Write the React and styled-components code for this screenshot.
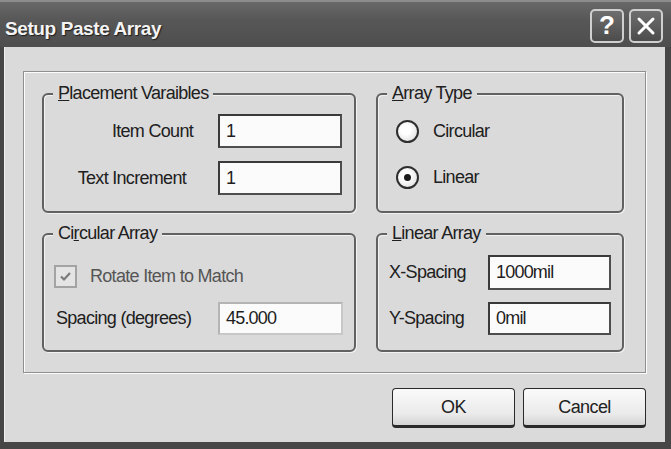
import React from "react";
import styled, { createGlobalStyle } from "styled-components";

const GlobalStyle = createGlobalStyle`
  html, body {
    margin: 0;
    padding: 0;
    background: #444;
  }
  body {
    font-family: "Liberation Sans", Arial, sans-serif;
  }
`;

const Window = styled.div`
  width: 671px;
  height: 449px;
  display: flex;
  flex-direction: column;
  background: #464646;
  box-sizing: border-box;
`;

const TitleBar = styled.div`
  height: 47px;
  flex: 0 0 47px;
  box-sizing: border-box;
  display: flex;
  align-items: center;
  padding: 2px 8px 0 5px;
  border-top: 2px solid #8c8c8c;
  background: linear-gradient(#686868, #575757 40%, #4e4e4e);
`;

const Title = styled.div`
  flex: 1;
  color: #f4f4f4;
  font-size: 19px;
  font-weight: bold;
  letter-spacing: -0.4px;
  text-shadow: 1px 1px 1px #1e1e1e;
  margin-top: 6px;
`;

const CaptionButton = styled.div`
  width: 34px;
  height: 34px;
  box-sizing: border-box;
  margin-left: ${(p) => (p.$first ? "0" : "5px")};
  border: 2px solid #cfcfcf;
  border-radius: 5px;
  background: linear-gradient(#6e6e6e, #4c4c4c);
  display: flex;
  align-items: center;
  justify-content: center;
  color: #fff;
  font-size: 26px;
  font-weight: bold;
`;

const Body = styled.div`
  flex: 1;
  margin: 0 6px 7px 4px;
  background: #dadada;
  padding: 24px 19px 0 18px;
  display: flex;
  flex-direction: column;
  border-left: 1px solid #f0f0f0;
`;

const Panel = styled.div`
  height: 302px;
  box-sizing: border-box;
  border: 1px solid #8f8f8f;
  box-shadow: inset 1px 1px 0 #fdfdfd, 1px 1px 0 #fdfdfd;
  display: grid;
  grid-template-columns: 314px 248px;
  grid-template-rows: 120px 119px;
  column-gap: 20px;
  row-gap: 20px;
  padding: 21px 0 0 18px;
`;

const Group = styled.div`
  position: relative;
  box-sizing: border-box;
  border: 2px solid #616161;
  border-radius: 6px;
  box-shadow: inset 1px 1px 0 #f2f2f2, 1px 1px 0 #f2f2f2;
  display: flex;
  flex-direction: column;
  padding: ${(p) => p.$pad};
  gap: ${(p) => p.$gap || "13px"};
`;

const Legend = styled.span`
  position: absolute;
  top: -12px;
  left: 9px;
  padding: 0 5px;
  background: #dadada;
  font-size: 18px;
  line-height: 20px;
  letter-spacing: -0.7px;
  color: #202020;
`;

const U = styled.span`
  text-decoration: underline;
`;

const FieldRow = styled.div`
  display: grid;
  grid-template-columns: ${(p) => p.$label}px ${(p) => p.$input}px;
  align-items: center;
`;

const Label = styled.span`
  font-size: 18px;
  letter-spacing: -0.7px;
  color: #202020;
  text-align: ${(p) => (p.$right ? "right" : "left")};
  padding-right: ${(p) => p.$pr || 0}px;
  padding-left: ${(p) => p.$pl || 0}px;
`;

const Input = styled.div`
  height: ${(p) => p.$h || 34}px;
  box-sizing: border-box;
  border: 2px solid ${(p) => (p.$disabled ? "#b4b4b4" : "#3a3a3a")};
  border-right-color: ${(p) => (p.$disabled ? "#c8c8c8" : "#4e4e4e")};
  border-bottom-color: ${(p) => (p.$disabled ? "#c8c8c8" : "#4e4e4e")};
  background: #fbfbfb;
  display: flex;
  align-items: center;
  padding-left: 6px;
  font-size: 18px;
  letter-spacing: -0.8px;
  color: #1e1e1e;
`;

const OptionRow = styled.div`
  display: flex;
  align-items: center;
  gap: ${(p) => p.$gap || 14}px;
  font-size: 18px;
  letter-spacing: -0.7px;
  color: ${(p) => (p.$muted ? "#555" : "#202020")};
`;

const Radio = styled.div`
  width: 23px;
  height: 23px;
  box-sizing: border-box;
  border-radius: 50%;
  border: 2px solid #2e2e2e;
  background: radial-gradient(circle at 40% 40%, #ffffff 30%, #d6d6d6 100%);
  display: flex;
  align-items: center;
  justify-content: center;
  &::after {
    content: "";
    width: 7px;
    height: 7px;
    border-radius: 50%;
    background: ${(p) => (p.$checked ? "#1c1c1c" : "transparent")};
  }
`;

const Check = styled.div`
  width: 23px;
  height: 23px;
  box-sizing: border-box;
  border: 2px solid #a3a3a3;
  background: #e4e4e4;
  display: flex;
  align-items: center;
  justify-content: center;
`;

const Footer = styled.div`
  display: flex;
  justify-content: flex-end;
  gap: 8px;
  margin-top: 15px;
`;

const Button = styled.div`
  width: 123px;
  height: 40px;
  box-sizing: border-box;
  border: 1px solid #2a2a2a;
  border-bottom-width: 3px;
  border-radius: 4px;
  background: linear-gradient(#fafafa, #eaeaea 70%, #d4d4d4);
  display: flex;
  align-items: center;
  justify-content: center;
  font-size: 18px;
  letter-spacing: -0.6px;
  color: #222;
`;

const App = () => (
  <>
    <GlobalStyle />
    <Window>
      <TitleBar>
        <Title>Setup Paste Array</Title>
        <CaptionButton $first>?</CaptionButton>
        <CaptionButton>
          <svg width="20" height="20" viewBox="0 0 20 20">
            <path d="M3 3 L17 17 M17 3 L3 17" stroke="#fff" strokeWidth="3" strokeLinecap="round" />
          </svg>
        </CaptionButton>
      </TitleBar>
      <Body>
        <Panel>
          <Group $pad="19px 0 0 0">
            <Legend>
              <U>P</U>lacement Varaibles
            </Legend>
            <FieldRow $label={174} $input={124}>
              <Label $right $pr={25}>Item Count</Label>
              <Input>1</Input>
            </FieldRow>
            <FieldRow $label={174} $input={124}>
              <Label $right $pr={32}>Text Increment</Label>
              <Input>1</Input>
            </FieldRow>
          </Group>

          <Group $pad="25px 0 0 18px" $gap="23px">
            <Legend>
              <U>A</U>rray Type
            </Legend>
            <OptionRow>
              <Radio />
              Circular
            </OptionRow>
            <OptionRow>
              <Radio $checked />
              Linear
            </OptionRow>
          </Group>

          <Group $pad="30px 0 0 10px" $gap="14px">
            <Legend>
              Ci<U>r</U>cular Array
            </Legend>
            <OptionRow $muted $gap={13}>
              <Check>
                <svg width="13" height="13" viewBox="0 0 13 13">
                  <path d="M2 6.5 L5 9.5 L11 3" fill="none" stroke="#7a7a7a" strokeWidth="2.2" />
                </svg>
              </Check>
              Rotate Item to Match
            </OptionRow>
            <FieldRow $label={164} $input={125}>
              <Label $pl={2}>Spacing (degrees)</Label>
              <Input $disabled $h={33}>45.000</Input>
            </FieldRow>
          </Group>

          <Group $pad="20px 0 0 11px" $gap="12px">
            <Legend>
              <U>L</U>inear Array
            </Legend>
            <FieldRow $label={99} $input={123}>
              <Label>X-Spacing</Label>
              <Input $h={35}>1000mil</Input>
            </FieldRow>
            <FieldRow $label={99} $input={123}>
              <Label>Y-Spacing</Label>
              <Input $h={33}>0mil</Input>
            </FieldRow>
          </Group>
        </Panel>
        <Footer>
          <Button>OK</Button>
          <Button>Cancel</Button>
        </Footer>
      </Body>
    </Window>
  </>
);

export default App;
